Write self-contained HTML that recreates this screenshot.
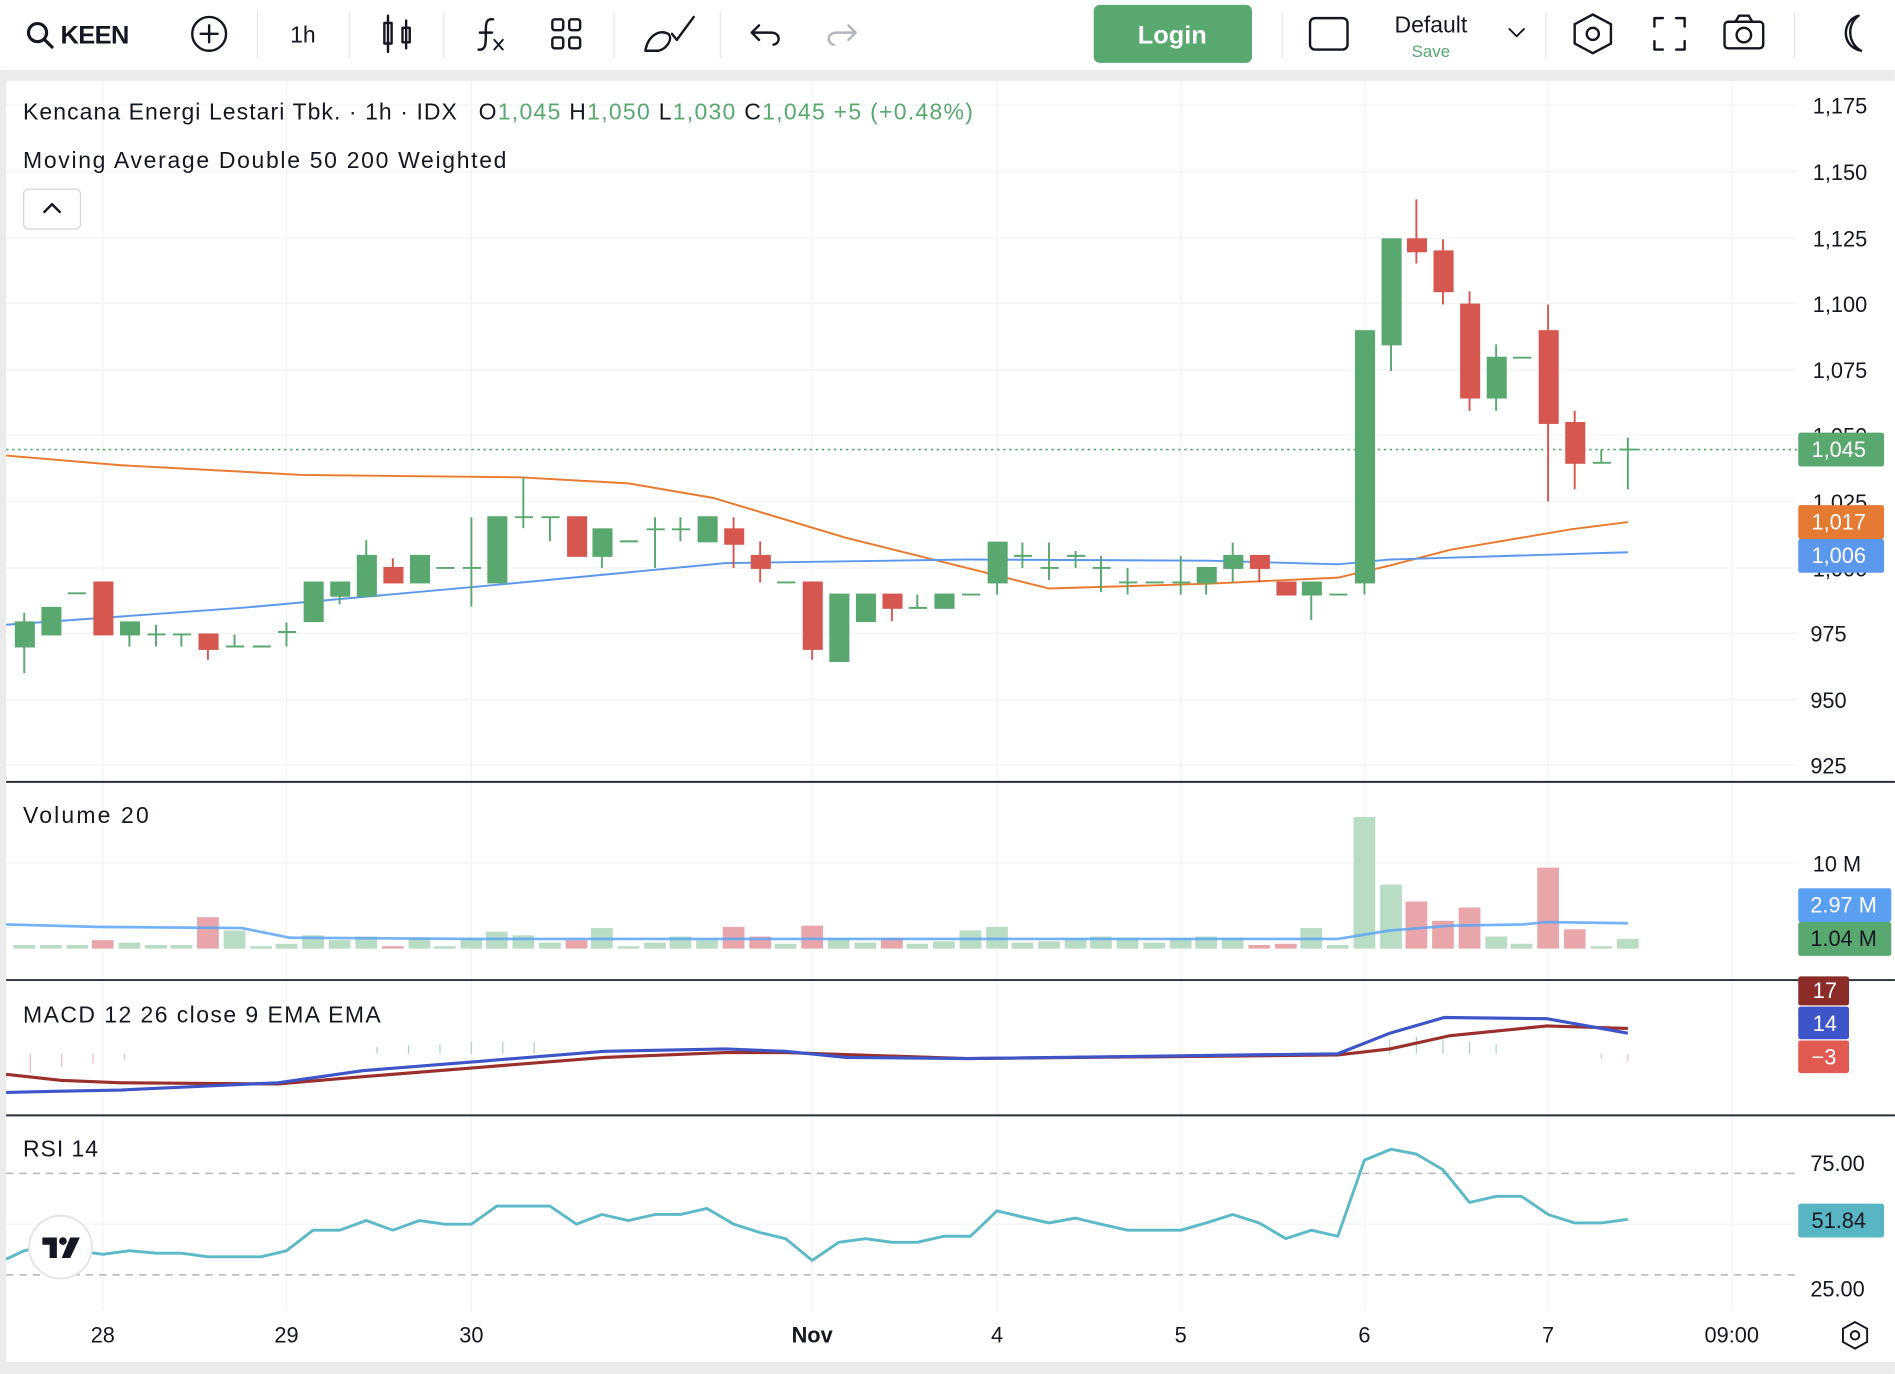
<!DOCTYPE html>
<html><head><meta charset="utf-8"><style>
html,body{margin:0;padding:0;background:#fff;overflow:hidden}
svg{display:block}
text{font-family:"Liberation Sans",sans-serif;}
</style></head><body>
<svg width="1895" height="1374" viewBox="0 0 1568 1137" xmlns="http://www.w3.org/2000/svg">
<rect width="1568" height="1137" fill="#fff"/>
<!-- toolbar -->
<rect x="0" y="58" width="1568" height="9" fill="#ebebeb"/>
<rect x="0" y="1127" width="1568" height="10" fill="#ebebeb"/>
<rect x="0" y="58" width="5" height="1079" fill="#ebebeb"/>
<g stroke="#e6e6e6" stroke-width="1">
<line x1="213" y1="10" x2="213" y2="48"/><line x1="289" y1="10" x2="289" y2="48"/><line x1="367" y1="10" x2="367" y2="48"/><line x1="508" y1="10" x2="508" y2="48"/><line x1="596" y1="10" x2="596" y2="48"/><line x1="1061" y1="10" x2="1061" y2="48"/><line x1="1279" y1="10" x2="1279" y2="48"/><line x1="1485" y1="10" x2="1485" y2="48"/>
</g>
<g fill="none" stroke="#131722" stroke-width="2" stroke-linecap="round" stroke-linejoin="round">
<circle cx="31" cy="27" r="7.5" stroke-width="2.6"/><line x1="37" y1="33" x2="43" y2="39" stroke-width="2.6"/>
<circle cx="173" cy="28" r="14"/><line x1="173" y1="21" x2="173" y2="35"/><line x1="166" y1="28" x2="180" y2="28"/>
<rect x="318" y="19" width="6" height="17"/><line x1="321" y1="13" x2="321" y2="43"/><rect x="333" y="23" width="6" height="12"/><line x1="336" y1="17" x2="336" y2="40"/>
<path d="M408 16 C401 15 402 22 402 28 C402 36 402 42 396 41 M397 27 H407" /><path d="M409 33 L416 41 M416 33 L409 41" stroke-width="1.6"/>
<rect x="457" y="16" width="9" height="9" rx="2"/><rect x="471" y="16" width="9" height="9" rx="2"/><rect x="457" y="31" width="9" height="9" rx="2"/><rect x="471" y="31" width="9" height="9" rx="2"/>
<path d="M534 42 C536 30 545 24 553 28 C557 32 552 40 545 42 Z M556 28 L560 33 L574 14"/>
<path d="M622 27 H638 C646 27 646 36 640 37 M628 21 L622 27 L628 33"/>
<path d="M708 27 H692 C684 27 684 36 690 37 M702 21 L708 27 L702 33" stroke="#b2b5be"/>
<rect x="1084" y="15" width="31" height="26" rx="4"/>
<path d="M1249 24 L1255 30 L1261 24" stroke-width="1.6"/>
<path d="M1318 12 L1333 20 V36 L1318 44 L1303 36 V20 Z"/><circle cx="1318" cy="28" r="5"/>
<path d="M1369 22 V15 H1376 M1387 15 H1394 V22 M1394 34 V41 H1387 M1376 41 H1369 V34"/>
<rect x="1427" y="18" width="32" height="22" rx="3"/><path d="M1436 18 L1439 13 H1447 L1450 18"/><circle cx="1443" cy="29" r="6"/>
<path d="M1538 13 C1525 16 1522 38 1540 42 C1530 37 1527 21 1538 13 Z"/>
</g>
<text x="50" y="36" font-size="21" font-weight="bold" fill="#131722" textLength="57">KEEN</text>
<text x="240" y="35" font-size="19" fill="#131722">1h</text>
<rect x="905" y="4" width="131" height="48" rx="5" fill="#58a86f"/>
<text x="970" y="36" font-size="21" font-weight="bold" fill="#fff" text-anchor="middle">Login</text>
<text x="1184" y="27" font-size="19" fill="#131722" text-anchor="middle">Default</text>
<text x="1184" y="47" font-size="14" fill="#58a86f" text-anchor="middle">Save</text>

<!-- grid -->
<g stroke="#f3f3f3" stroke-width="1">
<line x1="85" y1="67" x2="85" y2="1085"/><line x1="237" y1="67" x2="237" y2="1085"/><line x1="390" y1="67" x2="390" y2="1085"/><line x1="672" y1="67" x2="672" y2="1085"/><line x1="825" y1="67" x2="825" y2="1085"/><line x1="977" y1="67" x2="977" y2="1085"/><line x1="1129" y1="67" x2="1129" y2="1085"/><line x1="1281" y1="67" x2="1281" y2="1085"/><line x1="1433" y1="67" x2="1433" y2="1085"/>
<line x1="5" y1="87" x2="1487" y2="87"/><line x1="5" y1="142" x2="1487" y2="142"/><line x1="5" y1="197" x2="1487" y2="197"/><line x1="5" y1="251" x2="1487" y2="251"/><line x1="5" y1="306" x2="1487" y2="306"/><line x1="5" y1="360" x2="1487" y2="360"/><line x1="5" y1="415" x2="1487" y2="415"/><line x1="5" y1="470" x2="1487" y2="470"/><line x1="5" y1="524" x2="1487" y2="524"/><line x1="5" y1="579" x2="1487" y2="579"/><line x1="5" y1="633" x2="1487" y2="633"/>
<line x1="5" y1="714" x2="1487" y2="714"/><line x1="5" y1="1013" x2="1487" y2="1013"/>
</g>
<!-- pane separators -->
<g stroke="#2a2e39" stroke-width="1.6"><line x1="5" y1="647" x2="1568" y2="647"/><line x1="5" y1="811" x2="1568" y2="811"/><line x1="5" y1="923" x2="1568" y2="923"/></g>

<!-- legends -->
<text x="19" y="99" font-size="19" fill="#131722" textLength="359">Kencana Energi Lestari Tbk. · 1h · IDX</text>
<text x="396" y="99" font-size="19" fill="#131722" textLength="409">O<tspan fill="#58a86f">1,045</tspan> H<tspan fill="#58a86f">1,050</tspan> L<tspan fill="#58a86f">1,030</tspan> C<tspan fill="#58a86f">1,045 +5 (+0.48%)</tspan></text>
<text x="19" y="139" font-size="19" fill="#131722" textLength="400">Moving Average Double 50 200 Weighted</text>
<rect x="19.5" y="156.5" width="47" height="33" rx="4" fill="#fff" stroke="#d1d4dc"/>
<path d="M36 176 L43 169 L50 176" fill="none" stroke="#131722" stroke-width="2"/>
<text x="19" y="681" font-size="19" fill="#131722" textLength="104">Volume 20</text>
<text x="19" y="846" font-size="19" fill="#131722" textLength="296">MACD 12 26 close 9 EMA EMA</text>
<text x="19" y="957" font-size="19" fill="#131722" textLength="62">RSI 14</text>

<!-- MAs -->
<polyline fill="none" stroke="#e97a2d" stroke-width="1.6" points="5,377 100,385 250,393 430,395 520,400 590,412 700,445 800,470 868,487 1000,483 1107,478 1150,468 1200,455 1300,438 1347,432"/>
<polyline fill="none" stroke="#5b98ed" stroke-width="1.6" points="5,517 200,503 400,485 600,466 800,463 1000,464 1107,467 1150,463 1347,457"/>
<line x1="5" y1="372" x2="1487" y2="372" stroke="#58a86f" stroke-width="1.3" stroke-dasharray="2,3"/>

<!-- candles -->
<g stroke-width="1.6">
<g stroke="#58a86f" fill="#58a86f">
<line x1="20" y1="507" x2="20" y2="557"/><rect x="13" y="515" width="15" height="20"/>
<line x1="42" y1="503" x2="42" y2="525"/><rect x="35" y="503" width="15" height="22"/>
<line x1="56" y1="491" x2="71" y2="491"/>
<line x1="107" y1="515" x2="107" y2="535"/><rect x="100" y="515" width="15" height="10"/>
<line x1="129" y1="517" x2="129" y2="535"/><line x1="122" y1="525" x2="137" y2="525"/>
<line x1="150" y1="525" x2="150" y2="535"/><line x1="143" y1="525" x2="158" y2="525"/>
<line x1="194" y1="525" x2="194" y2="535"/><line x1="187" y1="535" x2="202" y2="535"/>
<line x1="209" y1="535" x2="224" y2="535"/>
<line x1="237" y1="515" x2="237" y2="535"/><line x1="230" y1="523" x2="245" y2="523"/>
<rect x="252" y="482" width="15" height="32"/>
<line x1="281" y1="482" x2="281" y2="500"/><rect x="274" y="482" width="15" height="11"/>
<line x1="303" y1="447" x2="303" y2="493"/><rect x="296" y="460" width="15" height="33"/>
<rect x="340" y="460" width="15" height="22"/>
<line x1="361" y1="470" x2="376" y2="470"/>
<line x1="390" y1="428" x2="390" y2="502"/><line x1="383" y1="470" x2="398" y2="470"/>
<rect x="404" y="428" width="15" height="54"/>
<line x1="433" y1="395" x2="433" y2="437"/><line x1="426" y1="428" x2="441" y2="428"/>
<line x1="455" y1="428" x2="455" y2="448"/><line x1="448" y1="428" x2="463" y2="428"/>
<line x1="498" y1="438" x2="498" y2="470"/><rect x="491" y="438" width="15" height="22"/>
<line x1="513" y1="448" x2="528" y2="448"/>
<line x1="542" y1="428" x2="542" y2="470"/><line x1="535" y1="438" x2="550" y2="438"/>
<line x1="563" y1="428" x2="563" y2="448"/><line x1="556" y1="438" x2="571" y2="438"/>
<rect x="578" y="428" width="15" height="20"/>
<line x1="643" y1="482" x2="658" y2="482"/>
<rect x="687" y="492" width="15" height="55"/>
<rect x="709" y="492" width="15" height="22"/>
<line x1="759" y1="492" x2="759" y2="503"/><line x1="752" y1="503" x2="767" y2="503"/>
<rect x="774" y="492" width="15" height="11"/>
<line x1="796" y1="492" x2="811" y2="492"/>
<line x1="825" y1="449" x2="825" y2="492"/><rect x="818" y="449" width="15" height="33"/>
<line x1="846" y1="449" x2="846" y2="470"/><line x1="839" y1="460" x2="854" y2="460"/>
<line x1="868" y1="449" x2="868" y2="480"/><line x1="861" y1="470" x2="876" y2="470"/>
<line x1="890" y1="456" x2="890" y2="470"/><line x1="883" y1="460" x2="898" y2="460"/>
<line x1="911" y1="460" x2="911" y2="490"/><line x1="904" y1="470" x2="919" y2="470"/>
<line x1="933" y1="470" x2="933" y2="492"/><line x1="926" y1="482" x2="941" y2="482"/>
<line x1="948" y1="482" x2="963" y2="482"/>
<line x1="977" y1="460" x2="977" y2="492"/><line x1="970" y1="482" x2="985" y2="482"/>
<line x1="998" y1="470" x2="998" y2="492"/><rect x="991" y="470" width="15" height="12"/>
<line x1="1020" y1="449" x2="1020" y2="482"/><rect x="1013" y="460" width="15" height="10"/>
<line x1="1085" y1="482" x2="1085" y2="513"/><rect x="1078" y="482" width="15" height="10"/>
<line x1="1100" y1="492" x2="1115" y2="492"/>
<line x1="1129" y1="274" x2="1129" y2="492"/><rect x="1122" y="274" width="15" height="208"/>
<line x1="1151" y1="198" x2="1151" y2="307"/><rect x="1144" y="198" width="15" height="87"/>
<line x1="1238" y1="285" x2="1238" y2="340"/><rect x="1231" y="296" width="15" height="33"/>
<line x1="1252" y1="296" x2="1267" y2="296"/>
<line x1="1325" y1="372" x2="1325" y2="383"/><line x1="1318" y1="383" x2="1333" y2="383"/>
<line x1="1347" y1="362" x2="1347" y2="405"/><line x1="1340" y1="372" x2="1355" y2="372"/>
</g>
<g stroke="#d5574f" fill="#d5574f">
<rect x="78" y="482" width="15" height="43"/>
<line x1="172" y1="525" x2="172" y2="546"/><rect x="165" y="525" width="15" height="12"/>
<line x1="325" y1="462" x2="325" y2="482"/><rect x="318" y="470" width="15" height="12"/>
<rect x="470" y="428" width="15" height="32"/>
<line x1="607" y1="428" x2="607" y2="470"/><rect x="600" y="438" width="15" height="12"/>
<line x1="629" y1="448" x2="629" y2="482"/><rect x="622" y="460" width="15" height="10"/>
<line x1="672" y1="482" x2="672" y2="546"/><rect x="665" y="482" width="15" height="55"/>
<line x1="738" y1="492" x2="738" y2="514"/><rect x="731" y="492" width="15" height="11"/>
<line x1="1042" y1="460" x2="1042" y2="482"/><rect x="1035" y="460" width="15" height="10"/>
<rect x="1057" y="482" width="15" height="10"/>
<line x1="1172" y1="165" x2="1172" y2="218"/><rect x="1165" y="198" width="15" height="10"/>
<line x1="1194" y1="198" x2="1194" y2="252"/><rect x="1187" y="208" width="15" height="33"/>
<line x1="1216" y1="241" x2="1216" y2="340"/><rect x="1209" y="252" width="15" height="77"/>
<line x1="1281" y1="252" x2="1281" y2="415"/><rect x="1274" y="274" width="15" height="76"/>
<line x1="1303" y1="340" x2="1303" y2="405"/><rect x="1296" y="350" width="15" height="33"/>
</g>
</g>

<!-- volume -->
<g fill="#b8dcc4">
<rect x="11" y="782" width="18" height="3"/><rect x="33" y="782" width="18" height="3"/><rect x="55" y="782" width="18" height="3"/><rect x="98" y="780" width="18" height="5"/><rect x="120" y="782" width="18" height="3"/><rect x="141" y="782" width="18" height="3"/><rect x="185" y="770" width="18" height="15"/><rect x="207" y="783" width="18" height="2"/><rect x="228" y="781" width="18" height="4"/><rect x="250" y="774" width="18" height="11"/><rect x="272" y="778" width="18" height="7"/><rect x="294" y="775" width="18" height="10"/><rect x="338" y="776" width="18" height="9"/><rect x="359" y="783" width="18" height="2"/><rect x="381" y="777" width="18" height="8"/><rect x="402" y="771" width="18" height="14"/><rect x="424" y="774" width="18" height="11"/><rect x="446" y="780" width="18" height="5"/><rect x="489" y="768" width="18" height="17"/><rect x="511" y="783" width="18" height="2"/><rect x="533" y="780" width="18" height="5"/><rect x="554" y="775" width="18" height="10"/><rect x="576" y="778" width="18" height="7"/><rect x="641" y="781" width="18" height="4"/><rect x="685" y="777" width="18" height="8"/><rect x="707" y="780" width="18" height="5"/><rect x="750" y="781" width="18" height="4"/><rect x="772" y="779" width="18" height="6"/><rect x="794" y="770" width="18" height="15"/><rect x="816" y="767" width="18" height="18"/><rect x="837" y="780" width="18" height="5"/><rect x="859" y="779" width="18" height="6"/><rect x="881" y="777" width="18" height="8"/><rect x="902" y="775" width="18" height="10"/><rect x="924" y="776" width="18" height="9"/><rect x="946" y="780" width="18" height="5"/><rect x="968" y="777" width="18" height="8"/><rect x="989" y="775" width="18" height="10"/><rect x="1011" y="776" width="18" height="9"/><rect x="1076" y="768" width="18" height="17"/><rect x="1098" y="782" width="18" height="3"/><rect x="1120" y="676" width="18" height="109"/><rect x="1142" y="732" width="18" height="53"/><rect x="1229" y="775" width="18" height="10"/><rect x="1250" y="781" width="18" height="4"/><rect x="1316" y="783" width="18" height="2"/><rect x="1338" y="777" width="18" height="8"/>
</g>
<g fill="#e8a6aa">
<rect x="76" y="778" width="18" height="7"/><rect x="163" y="759" width="18" height="26"/><rect x="316" y="783" width="18" height="2"/><rect x="468" y="778" width="18" height="7"/><rect x="598" y="767" width="18" height="18"/><rect x="620" y="775" width="18" height="10"/><rect x="663" y="766" width="18" height="19"/><rect x="729" y="776" width="18" height="9"/><rect x="1033" y="782" width="18" height="3"/><rect x="1055" y="781" width="18" height="4"/><rect x="1163" y="746" width="18" height="39"/><rect x="1185" y="762" width="18" height="23"/><rect x="1207" y="751" width="18" height="34"/><rect x="1272" y="718" width="18" height="67"/><rect x="1294" y="769" width="18" height="16"/>
</g>
<polyline fill="none" stroke="#5ba4f5" stroke-width="2.2" stroke-opacity="0.85" points="5,765 80,767 200,768 240,776 400,777 700,777 1107,777 1150,770 1200,766 1260,765 1280,763 1347,764"/>

<!-- MACD histogram ticks -->
<g stroke-width="1">
<g stroke="#f2b8b8"><line x1="25" y1="872" x2="25" y2="888"/><line x1="51" y1="872" x2="51" y2="883"/><line x1="77" y1="872" x2="77" y2="880"/><line x1="103" y1="872" x2="103" y2="877"/><line x1="1325" y1="872" x2="1325" y2="876"/><line x1="1347" y1="872" x2="1347" y2="878"/></g>
<g stroke="#a9d7bb"><line x1="312" y1="872" x2="312" y2="866"/><line x1="338" y1="872" x2="338" y2="865"/><line x1="364" y1="872" x2="364" y2="864"/><line x1="390" y1="872" x2="390" y2="862"/><line x1="416" y1="872" x2="416" y2="862"/><line x1="442" y1="872" x2="442" y2="862"/><line x1="1150" y1="872" x2="1150" y2="860"/><line x1="1172" y1="872" x2="1172" y2="858"/><line x1="1194" y1="872" x2="1194" y2="860"/><line x1="1216" y1="872" x2="1216" y2="862"/><line x1="1238" y1="872" x2="1238" y2="864"/></g>
</g>
<polyline fill="none" stroke="#9b2f2c" stroke-width="2.6" points="5,889 50,894 100,896 230,897 300,891 400,883 500,875 600,871 650,871 800,876 1107,873 1150,868 1200,857 1280,849 1347,851"/>
<polyline fill="none" stroke="#3d55c8" stroke-width="2.6" points="5,904 50,903 100,902 230,896 300,886 400,878 500,870 600,868 650,870 700,875 800,876 1107,872 1150,855 1195,842 1280,843 1347,855"/>

<!-- RSI -->
<g stroke="#b2b5be" stroke-width="1.2" stroke-dasharray="6,5"><line x1="5" y1="971" x2="1487" y2="971"/><line x1="5" y1="1055" x2="1487" y2="1055"/></g>
<polyline fill="none" stroke="#5bb9c8" stroke-width="2.4" stroke-linejoin="round" points="5,1042 20,1035 42,1030 63,1035 85,1038 107,1035 129,1037 150,1037 172,1040 194,1040 216,1040 237,1035 259,1018 281,1018 303,1010 325,1018 347,1010 368,1013 390,1013 411,998 433,998 455,998 477,1013 498,1005 520,1010 542,1005 563,1005 585,1000 607,1013 629,1020 650,1025 672,1043 694,1028 716,1025 738,1028 759,1028 781,1023 803,1023 825,1002 846,1007 868,1012 890,1008 911,1013 933,1018 955,1018 977,1018 998,1012 1020,1005 1042,1012 1064,1025 1085,1018 1107,1023 1129,960 1151,951 1172,955 1194,968 1216,995 1238,990 1259,990 1281,1005 1303,1012 1325,1012 1347,1009"/>
<circle cx="50" cy="1032" r="26" fill="#fff" stroke="#e3e3e3" stroke-width="1.5"/>
<path d="M35 1024 H47 V1041 H41 V1030 H35 Z" fill="#131722"/><circle cx="52" cy="1027" r="3.2" fill="#131722"/><path d="M58 1024 H66 L58 1041 H51 Z" fill="#131722"/>

<!-- right axis -->
<g font-size="18" fill="#131722">
<text x="1500" y="94">1,175</text><text x="1500" y="149">1,150</text><text x="1500" y="204">1,125</text><text x="1500" y="258">1,100</text><text x="1500" y="313">1,075</text><text x="1500" y="367">1,050</text><text x="1500" y="422">1,025</text><text x="1500" y="477">1,000</text><text x="1498" y="531">975</text><text x="1498" y="586">950</text><text x="1498" y="640">925</text>
<text x="1500" y="721">10 M</text>
<text x="1498" y="969">75.00</text><text x="1498" y="1073">25.00</text>
</g>
<rect x="1488" y="358" width="71" height="28" rx="2" fill="#58a86f"/><text x="1499" y="378" font-size="18" fill="#fff">1,045</text>
<rect x="1488" y="418" width="71" height="28" rx="2" fill="#e57a33"/><text x="1499" y="438" font-size="18" fill="#fff">1,017</text>
<rect x="1488" y="446" width="71" height="28" rx="2" fill="#5b98ed"/><text x="1499" y="466" font-size="18" fill="#fff">1,006</text>
<rect x="1488" y="735" width="77" height="28" rx="2" fill="#5b9ff2"/><text x="1498" y="755" font-size="18" fill="#fff">2.97 M</text>
<rect x="1488" y="763" width="77" height="28" rx="2" fill="#58a86f"/><text x="1498" y="783" font-size="18" fill="#131722">1.04 M</text>
<rect x="1488" y="808" width="42" height="24" rx="2" fill="#8c2c29"/><text x="1500" y="826" font-size="18" fill="#fff">17</text>
<rect x="1488" y="833" width="42" height="27" rx="2" fill="#3d55c8"/><text x="1500" y="853" font-size="18" fill="#fff">14</text>
<rect x="1488" y="861" width="42" height="27" rx="2" fill="#e05a52"/><text x="1499" y="881" font-size="18" fill="#fff">−3</text>
<rect x="1488" y="996" width="71" height="28" rx="2" fill="#57b5c4"/><text x="1499" y="1016" font-size="18" fill="#131722">51.84</text>

<!-- time axis -->
<g font-size="18" fill="#131722" text-anchor="middle">
<text x="85" y="1111">28</text><text x="237" y="1111">29</text><text x="390" y="1111">30</text><text x="672" y="1111" font-weight="bold">Nov</text><text x="825" y="1111">4</text><text x="977" y="1111">5</text><text x="1129" y="1111">6</text><text x="1281" y="1111">7</text><text x="1433" y="1111">09:00</text>
</g>
<g fill="none" stroke="#131722" stroke-width="1.6"><path d="M1535 1094 L1545 1099.5 V1110.5 L1535 1116 L1525 1110.5 V1099.5 Z"/><circle cx="1535" cy="1105" r="3.5"/></g>
</svg>
</body></html>
